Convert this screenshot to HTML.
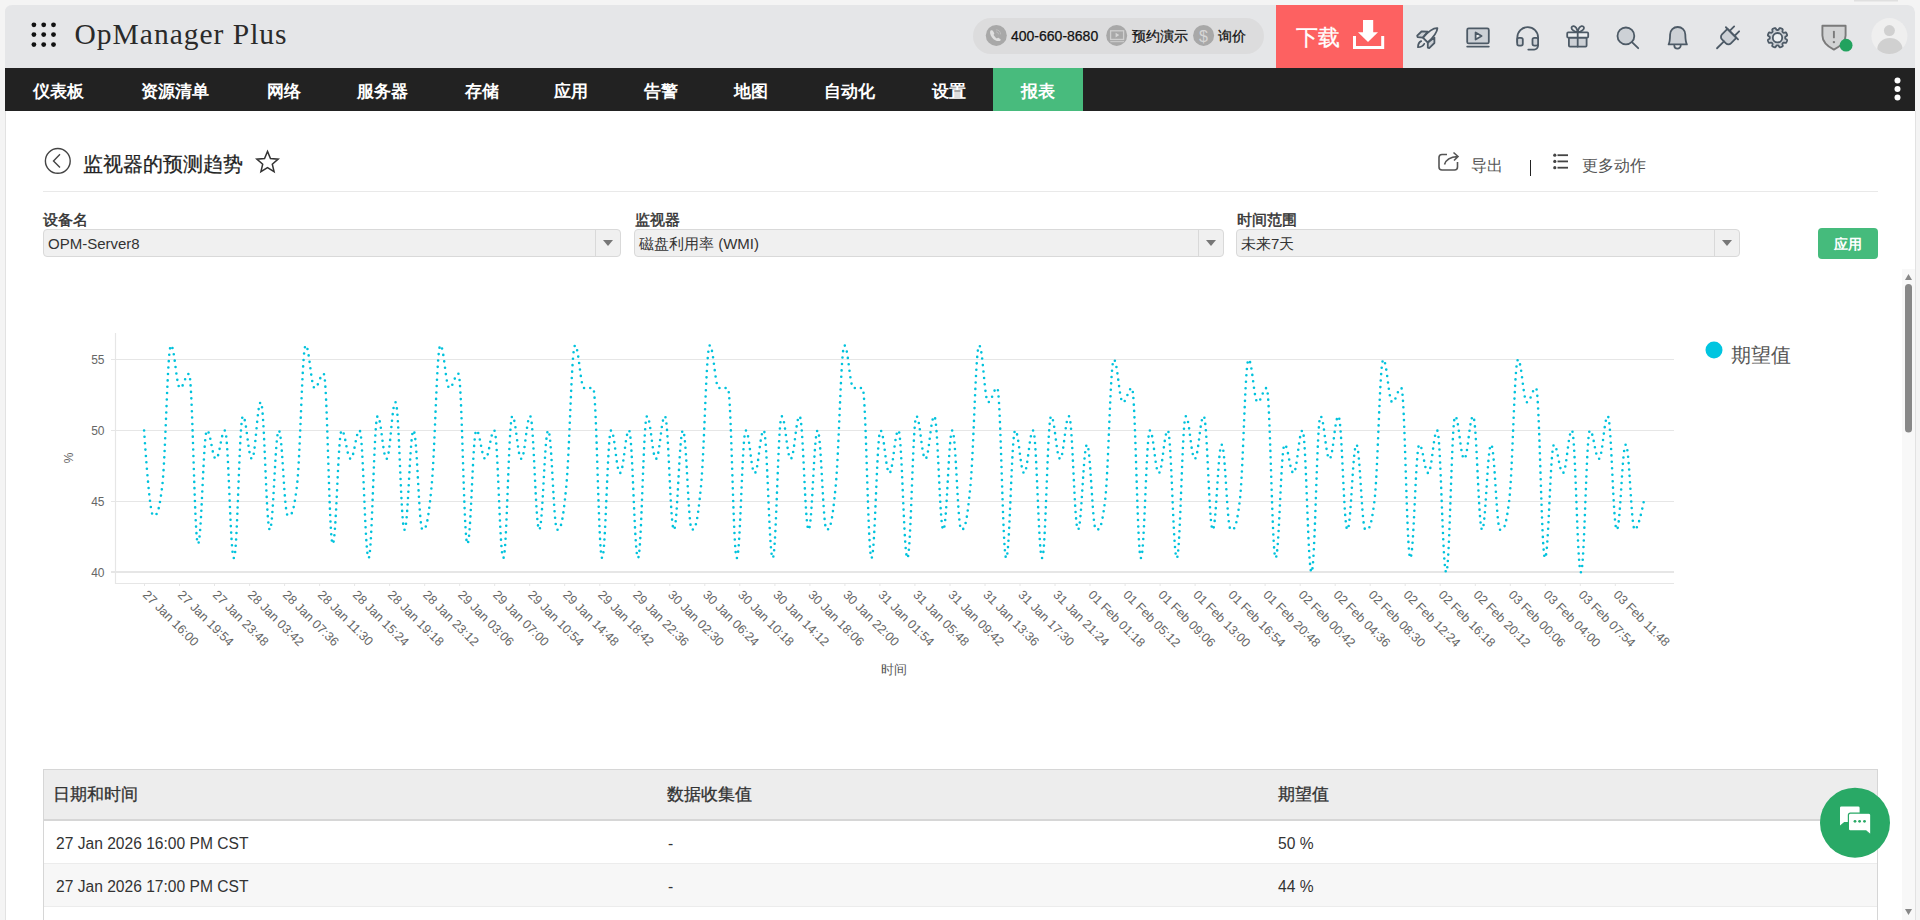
<!DOCTYPE html>
<html><head><meta charset="utf-8">
<style>
*{margin:0;padding:0;box-sizing:border-box}
html,body{width:1920px;height:920px;overflow:hidden;background:#f4f4f4;font-family:"Liberation Sans",sans-serif;color:#333}
.a{position:absolute;white-space:nowrap}
#panel{position:absolute;left:5px;top:5px;width:1910px;height:930px;background:#fff;border-radius:7px 7px 0 0;overflow:hidden;border-left:1px solid #e2e2e2}
#hdr{position:absolute;left:5px;top:5px;width:1910px;height:63px;background:#e5e6e8;border-radius:7px 7px 0 0}
#nav{position:absolute;left:5px;top:68px;width:1910px;height:43px;background:#222}
.nv{position:absolute;white-space:nowrap;top:68px;height:43px;line-height:48px;color:#fff;font-size:17px;font-weight:bold;padding:0 27px 0 27.5px}
.lbl{position:absolute;font-size:14.5px;color:#333;top:210.5px;line-height:18px;-webkit-text-stroke:0.45px #333}
.sel{position:absolute;top:229px;height:28px;background:#f0f0f0;border:1px solid #d9d9d9;border-radius:4px}
.sel .t{position:absolute;left:4px;top:1px;line-height:26px;font-size:15px;color:#333}
.sel .sp{position:absolute;right:24px;top:0;bottom:0;border-left:1px solid #d9d9d9}
.sel .ar{position:absolute;right:7px;top:10px;width:0;height:0;border-left:5px solid transparent;border-right:5px solid transparent;border-top:6px solid #777}
.th{position:absolute;font-size:17px;color:#333;top:783.5px;line-height:22px;-webkit-text-stroke:0.3px #333}
.td{position:absolute;font-size:15.6px;color:#333;line-height:20px}
</style></head><body>
<div id="panel"></div>
<div id="hdr"></div>
<div id="nav"></div>

<!-- header -->
<div class="a" style="left:74.5px;top:14px;font-family:'Liberation Serif',serif;font-size:29.5px;letter-spacing:1px;color:#2a2a2a;line-height:40px">OpManager Plus</div>
<div class="a" style="left:973px;top:18px;width:291px;height:36px;border-radius:18px;background:#dcdcdd"></div>
<div class="a" style="left:1011px;top:25.5px;font-size:14px;color:#111;line-height:20px;-webkit-text-stroke:0.25px #111">400-660-8680</div>
<div class="a" style="left:1132px;top:27px;font-size:13.7px;color:#111;line-height:20px;-webkit-text-stroke:0.25px #111">预约演示</div>
<div class="a" style="left:1218px;top:27px;font-size:13.7px;color:#111;line-height:20px;-webkit-text-stroke:0.25px #111">询价</div>
<div class="a" style="left:1276px;top:5px;width:127px;height:63px;background:#fd6161"></div>
<div class="a" style="left:1296px;top:23px;font-size:22px;color:#fff;line-height:30px;-webkit-text-stroke:0.3px #fff">下载</div>

<!-- nav -->
<div class="nv" style="left:5px">仪表板</div>
<div class="nv" style="left:113px">资源清单</div>
<div class="nv" style="left:239px">网络</div>
<div class="nv" style="left:329px">服务器</div>
<div class="nv" style="left:437px">存储</div>
<div class="nv" style="left:526px">应用</div>
<div class="nv" style="left:616px">告警</div>
<div class="nv" style="left:706px">地图</div>
<div class="nv" style="left:796px">自动化</div>
<div class="nv" style="left:904px">设置</div>
<div class="nv" style="left:993px;background:#48bb7d;width:90px">报表</div>

<!-- title -->
<div class="a" style="left:83px;top:151px;font-size:20px;color:#222;line-height:26px;-webkit-text-stroke:0.25px #222">监视器的预测趋势</div>
<div class="a" style="left:43px;top:191px;width:1835px;height:1px;background:#e9e9e9"></div>
<div class="a" style="left:1471px;top:154px;font-size:16px;color:#555;line-height:24px">导出</div>
<div class="a" style="left:1529.5px;top:160px;width:1.3px;height:15.5px;background:#222"></div>
<div class="a" style="left:1582px;top:154px;font-size:16px;color:#555;line-height:24px">更多动作</div>

<!-- filters -->
<div class="lbl" style="left:43px">设备名</div>
<div class="lbl" style="left:635px">监视器</div>
<div class="lbl" style="left:1237px">时间范围</div>
<div class="sel" style="left:43px;width:578px"><div class="t">OPM-Server8</div><div class="sp"></div><div class="ar"></div></div>
<div class="sel" style="left:634px;width:590px"><div class="t">磁盘利用率 (WMI)</div><div class="sp"></div><div class="ar"></div></div>
<div class="sel" style="left:1236px;width:504px"><div class="t">未来7天</div><div class="sp"></div><div class="ar"></div></div>
<div class="a" style="left:1818px;top:228px;width:60px;height:31px;background:#45bb7c;border-radius:4px;color:#fff;font-size:14px;font-weight:bold;text-align:center;line-height:33px">应用</div>

<!-- table -->
<div class="a" style="left:43px;top:769px;width:1835px;height:160px;border:1px solid #d6d6d6;border-bottom:0"></div>
<div class="a" style="left:44px;top:770px;width:1833px;height:51px;background:#ededed;border-bottom:2px solid #d6d6d6"></div>
<div class="a" style="left:44px;top:863px;width:1833px;height:44px;background:#f7f7f7;border-top:1px solid #ececec;border-bottom:1px solid #ececec"></div>
<div class="th" style="left:53px">日期和时间</div>
<div class="th" style="left:667px">数据收集值</div>
<div class="th" style="left:1278px">期望值</div>
<div class="td" style="left:56px;top:833.5px">27 Jan 2026 16:00 PM CST</div>
<div class="td" style="left:668px;top:833.5px">-</div>
<div class="td" style="left:1278px;top:833.5px">50 %</div>
<div class="td" style="left:56px;top:876.5px">27 Jan 2026 17:00 PM CST</div>
<div class="td" style="left:668px;top:876.5px">-</div>
<div class="td" style="left:1278px;top:876.5px">44 %</div>

<!-- svg overlay -->
<svg class="a" style="left:0;top:0" width="1920" height="920" viewBox="0 0 1920 920">
<g fill="#111"><circle cx="33.9" cy="24.8" r="2.4"/><circle cx="43.7" cy="24.8" r="2.4"/><circle cx="53.5" cy="24.8" r="2.4"/><circle cx="33.9" cy="34.6" r="2.4"/><circle cx="43.7" cy="34.6" r="2.4"/><circle cx="53.5" cy="34.6" r="2.4"/><circle cx="33.9" cy="44.6" r="2.4"/><circle cx="43.7" cy="44.6" r="2.4"/><circle cx="53.5" cy="44.6" r="2.4"/></g>
<!-- pill icons -->
<g fill="#a8a8a8"><circle cx="996.3" cy="35.4" r="10.5"/><circle cx="1116.7" cy="35.4" r="10.5"/><circle cx="1203.6" cy="35.4" r="10.5"/></g>
<!-- download icon -->
<g fill="#fff"><rect x="1363" y="20" width="10.2" height="13"/><path d="M1358 32.2H1378L1368 42Z"/><path d="M1353 36H1356V46H1381.2V36H1384.2V49H1353Z"/></g>
<!-- toolbar icons -->
<g fill="#cdd1d6" stroke="#4d5a66" stroke-width="1.8" stroke-linejoin="round" stroke-linecap="round">
<!-- rocket -->
<path d="M1427.8 31.7L1421.5 31.5L1417.2 35.7L1417.6 37.1L1422.9 37.6Z"/>
<path d="M1434.4 37.6V43L1429.2 48.1L1427.8 47.7V42.5Z"/>
<path d="M1422.9 37.6L1427.8 42.5C1433 37.5 1437.2 32.5 1437.4 28.2C1433 27.8 1427.5 32.5 1422.9 37.6Z" fill="none"/>
<path d="M1421.2 41.1C1418.8 42.2 1418 44.8 1418 47.2C1420.5 47.2 1423 46 1424.2 43.9" fill="none"/>
<!-- screen -->
<rect x="1467.2" y="28.4" width="21.6" height="15" rx="1.5"/>
<path d="M1475.6 32.4V39.5L1481.6 35.95Z" fill="#f2f3f4"/>
<path d="M1467.2 46.6H1488.8" fill="none"/>
<!-- headset -->
<path d="M1517.3 42V37.5A10.4 10.4 0 0 1 1538.1 37.5V45.5A4 4 0 0 1 1534 49.6H1528.3" fill="none"/>
<rect x="1517.2" y="37.8" width="5.6" height="7.8" rx="1.8"/>
<rect x="1532.5" y="37.8" width="5.6" height="7.8" rx="1.8"/>
<!-- gift -->
<rect x="1568.9" y="37.6" width="17.7" height="9" rx="1"/>
<rect x="1567.2" y="32.4" width="21" height="5.2" rx="1" fill="#eef0f2"/>
<path d="M1577.7 32.4V46.6M1577.7 32.2C1575 32 1571.5 30 1571.5 28C1571.5 26.5 1572.8 26 1573.8 26.2C1575.8 26.6 1577.2 29.5 1577.7 32.2C1578.2 29.5 1579.6 26.6 1581.6 26.2C1582.6 26 1584 26.5 1584 28C1584 30 1580.5 32 1577.7 32.2" fill="none"/>
<!-- search -->
<circle cx="1625.9" cy="35.9" r="8.4"/>
<path d="M1632.2 42.3L1638.2 48.2" fill="none"/>
<!-- bell -->
<path d="M1668.6 44.4H1686.9C1686 43 1685.4 40 1685.3 34.6A7.6 7.6 0 0 0 1670.1 34.6C1670 40 1669.5 43 1668.6 44.4Z"/>
<path d="M1674.3 45.4A3.2 3.2 0 0 0 1680.7 45.4" fill="none"/>
<!-- plug -->
<g transform="translate(1732.1 33.2) rotate(45)">
<path d="M-6.3 0.3V8A3.5 3.5 0 0 0 -2.8 11.5H2.8A3.5 3.5 0 0 0 6.3 8V0.3Z"/>
<path d="M-8.6 0.2H8.6M-3.4 0V-6.3M3.6 0V-6.3M0 11.5V21.3" fill="none"/>
</g>
<!-- gear -->
<path d="M1785.20 37.70L1785.20 37.85L1785.20 38.00L1785.20 38.15L1785.22 38.31L1785.25 38.46L1785.33 38.63L1785.52 38.81L1785.87 39.03L1786.35 39.28L1786.78 39.55L1787.03 39.79L1787.12 40.01L1787.13 40.21L1787.11 40.41L1787.06 40.60L1787.01 40.79L1786.95 40.98L1786.88 41.16L1786.81 41.34L1786.74 41.53L1786.66 41.71L1786.58 41.89L1786.50 42.06L1786.41 42.24L1786.31 42.41L1786.21 42.58L1786.09 42.73L1785.94 42.87L1785.72 42.96L1785.37 42.96L1784.88 42.84L1784.36 42.68L1783.96 42.59L1783.69 42.58L1783.52 42.64L1783.39 42.73L1783.27 42.83L1783.16 42.93L1783.05 43.04L1782.94 43.14L1782.84 43.25L1782.73 43.36L1782.63 43.47L1782.53 43.59L1782.44 43.72L1782.38 43.89L1782.39 44.16L1782.48 44.56L1782.64 45.08L1782.76 45.57L1782.76 45.92L1782.67 46.14L1782.53 46.29L1782.38 46.41L1782.21 46.51L1782.04 46.61L1781.86 46.70L1781.69 46.78L1781.51 46.86L1781.33 46.94L1781.14 47.01L1780.96 47.08L1780.78 47.15L1780.59 47.21L1780.40 47.26L1780.21 47.31L1780.01 47.33L1779.81 47.32L1779.59 47.23L1779.35 46.98L1779.08 46.55L1778.83 46.07L1778.61 45.72L1778.43 45.53L1778.26 45.45L1778.11 45.42L1777.95 45.40L1777.80 45.40L1777.65 45.40L1777.50 45.40L1777.35 45.40L1777.20 45.40L1777.05 45.40L1776.89 45.42L1776.74 45.45L1776.57 45.53L1776.39 45.72L1776.17 46.07L1775.92 46.55L1775.65 46.98L1775.41 47.23L1775.19 47.32L1774.99 47.33L1774.79 47.31L1774.60 47.26L1774.41 47.21L1774.22 47.15L1774.04 47.08L1773.86 47.01L1773.67 46.94L1773.49 46.86L1773.31 46.78L1773.14 46.70L1772.96 46.61L1772.79 46.51L1772.62 46.41L1772.47 46.29L1772.33 46.14L1772.24 45.92L1772.24 45.57L1772.36 45.08L1772.52 44.56L1772.61 44.16L1772.62 43.89L1772.56 43.72L1772.47 43.59L1772.37 43.47L1772.27 43.36L1772.16 43.25L1772.06 43.14L1771.95 43.04L1771.84 42.93L1771.73 42.83L1771.61 42.73L1771.48 42.64L1771.31 42.58L1771.04 42.59L1770.64 42.68L1770.12 42.84L1769.63 42.96L1769.28 42.96L1769.06 42.87L1768.91 42.73L1768.79 42.58L1768.69 42.41L1768.59 42.24L1768.50 42.06L1768.42 41.89L1768.34 41.71L1768.26 41.53L1768.19 41.34L1768.12 41.16L1768.05 40.98L1767.99 40.79L1767.94 40.60L1767.89 40.41L1767.87 40.21L1767.88 40.01L1767.97 39.79L1768.22 39.55L1768.65 39.28L1769.13 39.03L1769.48 38.81L1769.67 38.63L1769.75 38.46L1769.78 38.31L1769.80 38.15L1769.80 38.00L1769.80 37.85L1769.80 37.70L1769.80 37.55L1769.80 37.40L1769.80 37.25L1769.78 37.09L1769.75 36.94L1769.67 36.77L1769.48 36.59L1769.13 36.37L1768.65 36.12L1768.22 35.85L1767.97 35.61L1767.88 35.39L1767.87 35.19L1767.89 34.99L1767.94 34.80L1767.99 34.61L1768.05 34.42L1768.12 34.24L1768.19 34.06L1768.26 33.87L1768.34 33.69L1768.42 33.51L1768.50 33.34L1768.59 33.16L1768.69 32.99L1768.79 32.82L1768.91 32.67L1769.06 32.53L1769.28 32.44L1769.63 32.44L1770.12 32.56L1770.64 32.72L1771.04 32.81L1771.31 32.82L1771.48 32.76L1771.61 32.67L1771.73 32.57L1771.84 32.47L1771.95 32.36L1772.06 32.26L1772.16 32.15L1772.27 32.04L1772.37 31.93L1772.47 31.81L1772.56 31.68L1772.62 31.51L1772.61 31.24L1772.52 30.84L1772.36 30.32L1772.24 29.83L1772.24 29.48L1772.33 29.26L1772.47 29.11L1772.62 28.99L1772.79 28.89L1772.96 28.79L1773.14 28.70L1773.31 28.62L1773.49 28.54L1773.67 28.46L1773.86 28.39L1774.04 28.32L1774.22 28.25L1774.41 28.19L1774.60 28.14L1774.79 28.09L1774.99 28.07L1775.19 28.08L1775.41 28.17L1775.65 28.42L1775.92 28.85L1776.17 29.33L1776.39 29.68L1776.57 29.87L1776.74 29.95L1776.89 29.98L1777.05 30.00L1777.20 30.00L1777.35 30.00L1777.50 30.00L1777.65 30.00L1777.80 30.00L1777.95 30.00L1778.11 29.98L1778.26 29.95L1778.43 29.87L1778.61 29.68L1778.83 29.33L1779.08 28.85L1779.35 28.42L1779.59 28.17L1779.81 28.08L1780.01 28.07L1780.21 28.09L1780.40 28.14L1780.59 28.19L1780.78 28.25L1780.96 28.32L1781.14 28.39L1781.33 28.46L1781.51 28.54L1781.69 28.62L1781.86 28.70L1782.04 28.79L1782.21 28.89L1782.38 28.99L1782.53 29.11L1782.67 29.26L1782.76 29.48L1782.76 29.83L1782.64 30.32L1782.48 30.84L1782.39 31.24L1782.38 31.51L1782.44 31.68L1782.53 31.81L1782.63 31.93L1782.73 32.04L1782.84 32.15L1782.94 32.26L1783.05 32.36L1783.16 32.47L1783.27 32.57L1783.39 32.67L1783.52 32.76L1783.69 32.82L1783.96 32.81L1784.36 32.72L1784.88 32.56L1785.37 32.44L1785.72 32.44L1785.94 32.53L1786.09 32.67L1786.21 32.82L1786.31 32.99L1786.41 33.16L1786.50 33.34L1786.58 33.51L1786.66 33.69L1786.74 33.87L1786.81 34.06L1786.88 34.24L1786.95 34.42L1787.01 34.61L1787.06 34.80L1787.11 34.99L1787.13 35.19L1787.12 35.39L1787.03 35.61L1786.78 35.85L1786.35 36.12L1785.87 36.37L1785.52 36.59L1785.33 36.77L1785.25 36.94L1785.22 37.09L1785.20 37.25L1785.20 37.40L1785.20 37.55Z"/>
<circle cx="1777.5" cy="37.7" r="4.7" fill="#eef0f2"/>
</g>
<!-- shield -->
<path d="M1822.4 25.8H1845.6V35.5C1845.6 42 1840 46.5 1833.9 49.6C1827.8 46.5 1822.4 42 1822.4 35.5Z" fill="#d2d3d4" stroke="#7a7a7a" stroke-width="1.9" stroke-linejoin="round"/>
<path d="M1833.9 31.6V37.4" stroke="#7a7a7a" stroke-width="1.9" stroke-linecap="round"/>
<circle cx="1833.9" cy="42.1" r="1.2" fill="#7a7a7a"/>
<circle cx="1846.1" cy="45.2" r="6.4" fill="#22a25e"/>
<!-- avatar -->
<defs><clipPath id="av"><circle cx="1889.4" cy="36.1" r="18"/></clipPath></defs>
<circle cx="1889.4" cy="36.1" r="18" fill="#efefef"/>
<g clip-path="url(#av)" fill="#d0d0d0"><circle cx="1889.4" cy="30.6" r="5.5"/><ellipse cx="1889.9" cy="49" rx="12.6" ry="11"/></g>
<!-- pill icons detail -->
<path d="M990.6 30.6C989.6 32 989.8 34.5 992 37.4C994.2 40.2 997 41.3 998.8 41.1C1000.4 40.9 1001.2 40 1000.5 39.2L998.7 38C998 37.6 997.5 38 996.8 38.4C995.5 37.6 994.3 36.2 993.5 34.8C994 34.2 994.6 33.6 994.1 32.9L992.9 30.8C992.3 30 991.3 30 990.6 30.6Z" fill="#e0e0e0"/>
<path d="M995.9 29.8A4.8 4.8 0 0 1 1000.6 34.4M996 31.8A2.8 2.8 0 0 1 998.6 34.4" fill="none" stroke="#bdbdbd" stroke-width="1"/>
<rect x="1110.6" y="30.8" width="13" height="8.6" fill="none" stroke="#cfcfcf" stroke-width="1.3"/>
<path d="M1115.6 32.8V37.4L1119.3 35.1Z" fill="#d4d4d4"/>
<path d="M1110.3 41.7H1124" stroke="#cfcfcf" stroke-width="1"/>
<text x="1203.5" y="41.5" font-size="16" fill="#d6d6d6" text-anchor="middle">$</text>
<!-- kebab -->
<g fill="#fff"><circle cx="1897.5" cy="80.6" r="3"/><circle cx="1897.5" cy="89" r="3"/><circle cx="1897.5" cy="97.5" r="3"/></g>
<!-- back & star -->
<circle cx="57.8" cy="160.9" r="12.4" fill="none" stroke="#444" stroke-width="1.4"/>
<path d="M60 154.3L53.5 160.9L60 167.6" fill="none" stroke="#444" stroke-width="1.4"/>
<path d="M267.50 151.40L270.46 158.52L278.15 159.14L272.29 164.16L274.08 171.66L267.50 167.64L260.92 171.66L262.71 164.16L256.85 159.14L264.54 158.52Z" fill="none" stroke="#333" stroke-width="1.5" stroke-linejoin="miter"/>
<!-- export & list -->
<path d="M1447 154.5H1442A3 3 0 0 0 1439 157.5V167A3 3 0 0 0 1442 170H1454.5A3 3 0 0 0 1457.5 167V162" fill="none" stroke="#555" stroke-width="1.6"/>
<path d="M1444.5 164.5C1446 159.5 1450 157 1457.5 156.5M1453.5 152.5L1458 156.5L1454 160.5" fill="none" stroke="#555" stroke-width="1.6"/>
<g fill="#444"><circle cx="1554.8" cy="155.2" r="1.6"/><circle cx="1554.8" cy="161.4" r="1.6"/><circle cx="1554.8" cy="167.7" r="1.6"/><rect x="1557.5" y="154.3" width="10.5" height="1.8"/><rect x="1557.5" y="160.5" width="10.5" height="1.8"/><rect x="1557.5" y="166.8" width="10.5" height="1.8"/></g>

<!-- chart -->
<g stroke="#e6e6e6" stroke-width="1">
<path d="M115.5 359.5H1674M115.5 430.5H1674M115.5 501.5H1674M111 359.5H115.5M111 430.5H115.5M111 501.5H115.5"/><path d="M111 572H1674" stroke-width="2"/>
</g>
<path d="M115.5 333V583.5H1674" fill="none" stroke="#e6e6e6" stroke-width="1.2"/>
<path d="M144.5 583V586M179.5 583V586M214.5 583V586M249.6 583V586M284.6 583V586M319.6 583V586M354.6 583V586M389.6 583V586M424.7 583V586M459.7 583V586M494.7 583V586M529.7 583V586M564.7 583V586M599.8 583V586M634.8 583V586M669.8 583V586M704.8 583V586M739.8 583V586M774.9 583V586M809.9 583V586M844.9 583V586M879.9 583V586M914.9 583V586M950.0 583V586M985.0 583V586M1020.0 583V586M1055.0 583V586M1090.0 583V586M1125.1 583V586M1160.1 583V586M1195.1 583V586M1230.1 583V586M1265.1 583V586M1300.2 583V586M1335.2 583V586M1370.2 583V586M1405.2 583V586M1440.2 583V586M1475.3 583V586M1510.3 583V586M1545.3 583V586M1580.3 583V586M1615.3 583V586" stroke="#e6e6e6" stroke-width="1"/>
<g font-size="12" fill="#666" text-anchor="end"><text x="104.5" y="364">55</text><text x="104.5" y="435">50</text><text x="104.5" y="506">45</text><text x="104.5" y="577">40</text></g>
<text x="73" y="458" font-size="12" fill="#666" transform="rotate(-90 73 458)" text-anchor="middle">%</text>
<g font-size="12.6" fill="#666">
<text x="142.0" y="595.5" transform="rotate(45 142.0 595.5)">27 Jan 16:00</text>
<text x="177.0" y="595.5" transform="rotate(45 177.0 595.5)">27 Jan 19:54</text>
<text x="212.0" y="595.5" transform="rotate(45 212.0 595.5)">27 Jan 23:48</text>
<text x="247.1" y="595.5" transform="rotate(45 247.1 595.5)">28 Jan 03:42</text>
<text x="282.1" y="595.5" transform="rotate(45 282.1 595.5)">28 Jan 07:36</text>
<text x="317.1" y="595.5" transform="rotate(45 317.1 595.5)">28 Jan 11:30</text>
<text x="352.1" y="595.5" transform="rotate(45 352.1 595.5)">28 Jan 15:24</text>
<text x="387.1" y="595.5" transform="rotate(45 387.1 595.5)">28 Jan 19:18</text>
<text x="422.2" y="595.5" transform="rotate(45 422.2 595.5)">28 Jan 23:12</text>
<text x="457.2" y="595.5" transform="rotate(45 457.2 595.5)">29 Jan 03:06</text>
<text x="492.2" y="595.5" transform="rotate(45 492.2 595.5)">29 Jan 07:00</text>
<text x="527.2" y="595.5" transform="rotate(45 527.2 595.5)">29 Jan 10:54</text>
<text x="562.2" y="595.5" transform="rotate(45 562.2 595.5)">29 Jan 14:48</text>
<text x="597.3" y="595.5" transform="rotate(45 597.3 595.5)">29 Jan 18:42</text>
<text x="632.3" y="595.5" transform="rotate(45 632.3 595.5)">29 Jan 22:36</text>
<text x="667.3" y="595.5" transform="rotate(45 667.3 595.5)">30 Jan 02:30</text>
<text x="702.3" y="595.5" transform="rotate(45 702.3 595.5)">30 Jan 06:24</text>
<text x="737.3" y="595.5" transform="rotate(45 737.3 595.5)">30 Jan 10:18</text>
<text x="772.4" y="595.5" transform="rotate(45 772.4 595.5)">30 Jan 14:12</text>
<text x="807.4" y="595.5" transform="rotate(45 807.4 595.5)">30 Jan 18:06</text>
<text x="842.4" y="595.5" transform="rotate(45 842.4 595.5)">30 Jan 22:00</text>
<text x="877.4" y="595.5" transform="rotate(45 877.4 595.5)">31 Jan 01:54</text>
<text x="912.4" y="595.5" transform="rotate(45 912.4 595.5)">31 Jan 05:48</text>
<text x="947.5" y="595.5" transform="rotate(45 947.5 595.5)">31 Jan 09:42</text>
<text x="982.5" y="595.5" transform="rotate(45 982.5 595.5)">31 Jan 13:36</text>
<text x="1017.5" y="595.5" transform="rotate(45 1017.5 595.5)">31 Jan 17:30</text>
<text x="1052.5" y="595.5" transform="rotate(45 1052.5 595.5)">31 Jan 21:24</text>
<text x="1087.5" y="595.5" transform="rotate(45 1087.5 595.5)">01 Feb 01:18</text>
<text x="1122.6" y="595.5" transform="rotate(45 1122.6 595.5)">01 Feb 05:12</text>
<text x="1157.6" y="595.5" transform="rotate(45 1157.6 595.5)">01 Feb 09:06</text>
<text x="1192.6" y="595.5" transform="rotate(45 1192.6 595.5)">01 Feb 13:00</text>
<text x="1227.6" y="595.5" transform="rotate(45 1227.6 595.5)">01 Feb 16:54</text>
<text x="1262.6" y="595.5" transform="rotate(45 1262.6 595.5)">01 Feb 20:48</text>
<text x="1297.7" y="595.5" transform="rotate(45 1297.7 595.5)">02 Feb 00:42</text>
<text x="1332.7" y="595.5" transform="rotate(45 1332.7 595.5)">02 Feb 04:36</text>
<text x="1367.7" y="595.5" transform="rotate(45 1367.7 595.5)">02 Feb 08:30</text>
<text x="1402.7" y="595.5" transform="rotate(45 1402.7 595.5)">02 Feb 12:24</text>
<text x="1437.7" y="595.5" transform="rotate(45 1437.7 595.5)">02 Feb 16:18</text>
<text x="1472.8" y="595.5" transform="rotate(45 1472.8 595.5)">02 Feb 20:12</text>
<text x="1507.8" y="595.5" transform="rotate(45 1507.8 595.5)">03 Feb 00:06</text>
<text x="1542.8" y="595.5" transform="rotate(45 1542.8 595.5)">03 Feb 04:00</text>
<text x="1577.8" y="595.5" transform="rotate(45 1577.8 595.5)">03 Feb 07:54</text>
<text x="1612.8" y="595.5" transform="rotate(45 1612.8 595.5)">03 Feb 11:48</text>
</g>
<text x="894" y="674" font-size="13" fill="#555" text-anchor="middle">时间</text>
<path d="M144.1 430.5C144.1 430.5 149.5 515.5 153.1 515.5C156.7 515.5 158.5 515.5 162.1 487.2C165.7 458.8 167.4 345.5 171.0 345.5C174.6 345.5 176.4 388.0 180.0 388.0C183.6 388.0 185.4 373.8 189.0 373.8C192.6 373.8 194.4 543.9 198.0 543.9C201.6 543.9 203.4 430.5 207.0 430.5C210.6 430.5 212.3 458.8 215.9 458.8C219.5 458.8 221.3 430.5 224.9 430.5C228.5 430.5 230.3 558.0 233.9 558.0C237.5 558.0 239.3 416.3 242.9 416.3C246.5 416.3 248.3 458.8 251.9 458.8C255.5 458.8 257.2 402.2 260.8 402.2C264.4 402.2 266.2 529.7 269.8 529.7C273.4 529.7 275.2 430.5 278.8 430.5C282.4 430.5 284.2 515.5 287.8 515.5C291.4 515.5 293.2 515.5 296.8 487.2C300.4 458.8 302.1 345.5 305.7 345.5C309.3 345.5 311.1 388.0 314.7 388.0C318.3 388.0 320.1 373.8 323.7 373.8C327.3 373.8 329.1 543.9 332.7 543.9C336.3 543.9 338.1 430.5 341.7 430.5C345.3 430.5 347.0 458.8 350.6 458.8C354.2 458.8 356.0 430.5 359.6 430.5C363.2 430.5 365.0 558.0 368.6 558.0C372.2 558.0 374.0 416.3 377.6 416.3C381.2 416.3 383.0 458.8 386.6 458.8C390.2 458.8 391.9 402.2 395.5 402.2C399.1 402.2 400.9 529.7 404.5 529.7C408.1 529.7 409.9 430.5 413.5 430.5C417.1 430.5 418.9 529.7 422.5 529.7C426.1 529.7 427.9 524.0 431.5 487.2C435.1 450.3 436.8 345.5 440.4 345.5C444.0 345.5 445.8 388.0 449.4 388.0C453.0 388.0 454.8 373.8 458.4 373.8C462.0 373.8 463.8 543.9 467.4 543.9C471.0 543.9 472.8 430.5 476.4 430.5C480.0 430.5 481.7 458.8 485.3 458.8C488.9 458.8 490.7 430.5 494.3 430.5C497.9 430.5 499.7 558.0 503.3 558.0C506.9 558.0 508.7 416.3 512.3 416.3C515.9 416.3 517.7 458.8 521.3 458.8C524.9 458.8 526.6 416.3 530.2 416.3C533.8 416.3 535.6 529.7 539.2 529.7C542.8 529.7 544.6 430.5 548.2 430.5C551.8 430.5 553.6 529.7 557.2 529.7C560.8 529.7 562.6 524.0 566.2 487.2C569.8 450.3 571.5 345.5 575.1 345.5C578.7 345.5 580.5 388.0 584.1 388.0C587.7 388.0 589.5 388.0 593.1 388.0C596.7 388.0 598.5 558.0 602.1 558.0C605.7 558.0 607.5 430.5 611.1 430.5C614.7 430.5 616.4 473.0 620.0 473.0C623.6 473.0 625.4 430.5 629.0 430.5C632.6 430.5 634.4 558.0 638.0 558.0C641.6 558.0 643.4 416.3 647.0 416.3C650.6 416.3 652.4 458.8 656.0 458.8C659.6 458.8 661.3 416.3 664.9 416.3C668.5 416.3 670.3 529.7 673.9 529.7C677.5 529.7 679.3 430.5 682.9 430.5C686.5 430.5 688.3 529.7 691.9 529.7C695.5 529.7 697.3 524.0 700.9 487.2C704.5 450.3 706.2 345.5 709.8 345.5C713.4 345.5 715.2 388.0 718.8 388.0C722.4 388.0 724.2 388.0 727.8 388.0C731.4 388.0 733.2 558.0 736.8 558.0C740.4 558.0 742.2 430.5 745.8 430.5C749.4 430.5 751.1 473.0 754.7 473.0C758.3 473.0 760.1 430.5 763.7 430.5C767.3 430.5 769.1 558.0 772.7 558.0C776.3 558.0 778.1 416.3 781.7 416.3C785.3 416.3 787.1 458.8 790.7 458.8C794.3 458.8 796.0 416.3 799.6 416.3C803.2 416.3 805.0 529.7 808.6 529.7C812.2 529.7 814.0 430.5 817.6 430.5C821.2 430.5 823.0 529.7 826.6 529.7C830.2 529.7 832.0 524.0 835.6 487.2C839.2 450.3 840.9 345.5 844.5 345.5C848.1 345.5 849.9 388.0 853.5 388.0C857.1 388.0 858.9 388.0 862.5 388.0C866.1 388.0 867.9 558.0 871.5 558.0C875.1 558.0 876.9 430.5 880.5 430.5C884.1 430.5 885.8 473.0 889.4 473.0C893.0 473.0 894.8 430.5 898.4 430.5C902.0 430.5 903.8 558.0 907.4 558.0C911.0 558.0 912.8 416.3 916.4 416.3C920.0 416.3 921.8 458.8 925.4 458.8C929.0 458.8 930.7 416.3 934.3 416.3C937.9 416.3 939.7 529.7 943.3 529.7C946.9 529.7 948.7 430.5 952.3 430.5C955.9 430.5 957.7 529.7 961.3 529.7C964.9 529.7 966.7 524.0 970.3 487.2C973.9 450.3 975.6 345.5 979.2 345.5C982.8 345.5 984.6 402.2 988.2 402.2C991.8 402.2 993.6 388.0 997.2 388.0C1000.8 388.0 1002.6 558.0 1006.2 558.0C1009.8 558.0 1011.6 430.5 1015.2 430.5C1018.8 430.5 1020.5 473.0 1024.1 473.0C1027.7 473.0 1029.5 430.5 1033.1 430.5C1036.7 430.5 1038.5 558.0 1042.1 558.0C1045.7 558.0 1047.5 416.3 1051.1 416.3C1054.7 416.3 1056.5 458.8 1060.1 458.8C1063.7 458.8 1065.4 416.3 1069.0 416.3C1072.6 416.3 1074.4 529.7 1078.0 529.7C1081.6 529.7 1083.4 444.7 1087.0 444.7C1090.6 444.7 1092.4 529.7 1096.0 529.7C1099.6 529.7 1101.4 529.7 1105.0 501.4C1108.6 473.0 1110.3 359.7 1113.9 359.7C1117.5 359.7 1119.3 402.2 1122.9 402.2C1126.5 402.2 1128.3 388.0 1131.9 388.0C1135.5 388.0 1137.3 558.0 1140.9 558.0C1144.5 558.0 1146.3 430.5 1149.9 430.5C1153.5 430.5 1155.2 473.0 1158.8 473.0C1162.4 473.0 1164.2 430.5 1167.8 430.5C1171.4 430.5 1173.2 558.0 1176.8 558.0C1180.4 558.0 1182.2 416.3 1185.8 416.3C1189.4 416.3 1191.2 458.8 1194.8 458.8C1198.4 458.8 1200.1 416.3 1203.7 416.3C1207.3 416.3 1209.1 529.7 1212.7 529.7C1216.3 529.7 1218.1 444.7 1221.7 444.7C1225.3 444.7 1227.1 529.7 1230.7 529.7C1234.3 529.7 1236.1 529.7 1239.7 501.4C1243.3 473.0 1245.0 359.7 1248.6 359.7C1252.2 359.7 1254.0 402.2 1257.6 402.2C1261.2 402.2 1263.0 388.0 1266.6 388.0C1270.2 388.0 1272.0 558.0 1275.6 558.0C1279.2 558.0 1281.0 444.7 1284.6 444.7C1288.2 444.7 1289.9 473.0 1293.5 473.0C1297.1 473.0 1298.9 430.5 1302.5 430.5C1306.1 430.5 1307.9 572.2 1311.5 572.2C1315.1 572.2 1316.9 416.3 1320.5 416.3C1324.1 416.3 1325.9 458.8 1329.5 458.8C1333.1 458.8 1334.8 416.3 1338.4 416.3C1342.0 416.3 1343.8 529.7 1347.4 529.7C1351.0 529.7 1352.8 444.7 1356.4 444.7C1360.0 444.7 1361.8 529.7 1365.4 529.7C1369.0 529.7 1370.8 529.7 1374.4 501.4C1378.0 473.0 1379.7 359.7 1383.3 359.7C1386.9 359.7 1388.7 402.2 1392.3 402.2C1395.9 402.2 1397.7 388.0 1401.3 388.0C1404.9 388.0 1406.7 558.0 1410.3 558.0C1413.9 558.0 1415.7 444.7 1419.3 444.7C1422.9 444.7 1424.6 473.0 1428.2 473.0C1431.8 473.0 1433.6 430.5 1437.2 430.5C1440.8 430.5 1442.6 572.2 1446.2 572.2C1449.8 572.2 1451.6 416.3 1455.2 416.3C1458.8 416.3 1460.6 458.8 1464.2 458.8C1467.8 458.8 1469.5 416.3 1473.1 416.3C1476.7 416.3 1478.5 529.7 1482.1 529.7C1485.7 529.7 1487.5 444.7 1491.1 444.7C1494.7 444.7 1496.5 529.7 1500.1 529.7C1503.7 529.7 1505.5 529.7 1509.1 501.4C1512.7 473.0 1514.4 359.7 1518.0 359.7C1521.6 359.7 1523.4 402.2 1527.0 402.2C1530.6 402.2 1532.4 388.0 1536.0 388.0C1539.6 388.0 1541.4 558.0 1545.0 558.0C1548.6 558.0 1550.4 444.7 1554.0 444.7C1557.6 444.7 1559.3 473.0 1562.9 473.0C1566.5 473.0 1568.3 430.5 1571.9 430.5C1575.5 430.5 1577.3 572.2 1580.9 572.2C1584.5 572.2 1586.3 430.5 1589.9 430.5C1593.5 430.5 1595.3 458.8 1598.9 458.8C1602.5 458.8 1604.2 416.3 1607.8 416.3C1611.4 416.3 1613.2 529.7 1616.8 529.7C1620.4 529.7 1622.2 444.7 1625.8 444.7C1629.4 444.7 1631.2 529.7 1634.8 529.7C1638.4 529.7 1643.8 501.4 1643.8 501.4" fill="none" stroke="#00c2dc" stroke-width="2.6" stroke-linecap="round" stroke-dasharray="0 6.4"/>
<circle cx="1714" cy="350" r="8.5" fill="#00c5e0"/>
<text x="1731" y="362" font-size="20" fill="#555">期望值</text>

<!-- scrollbar -->
<rect x="1902" y="269" width="13" height="651" fill="#f8f8f8"/>
<rect x="1905" y="284" width="7" height="148.5" rx="3.5" fill="#888"/>
<path d="M1905 280H1912L1908.5 274Z" fill="#888"/>
<path d="M1905 909H1912L1908.5 915Z" fill="#888"/>
<rect x="1915" y="5" width="5" height="915" fill="#f4f4f4"/>
<rect x="1915" y="111" width="1" height="809" fill="#e2e2e2"/>
<rect x="1854" y="0" width="44" height="1.5" fill="#e0e0e0"/>

<!-- chat -->
<circle cx="1855" cy="822.7" r="35" fill="#29a966"/>
<path d="M1841.4 806.4H1858.2A1.4 1.4 0 0 1 1859.6 807.8V822H1844.2L1840 825.6V807.8A1.4 1.4 0 0 1 1841.4 806.4Z" fill="#fff"/>
<path d="M1850.3 813.2H1868.9A1.9 1.9 0 0 1 1870.8 815.1V835L1865.9 830.9H1850.3A1.9 1.9 0 0 1 1848.4 829V815.1A1.9 1.9 0 0 1 1850.3 813.2Z" fill="#fff" stroke="#29a966" stroke-width="1.2"/>
<g fill="#29a966"><circle cx="1855" cy="821.3" r="1.4"/><circle cx="1859.6" cy="821.3" r="1.4"/><circle cx="1864.5" cy="821.3" r="1.4"/></g>
</svg>
</body></html>
